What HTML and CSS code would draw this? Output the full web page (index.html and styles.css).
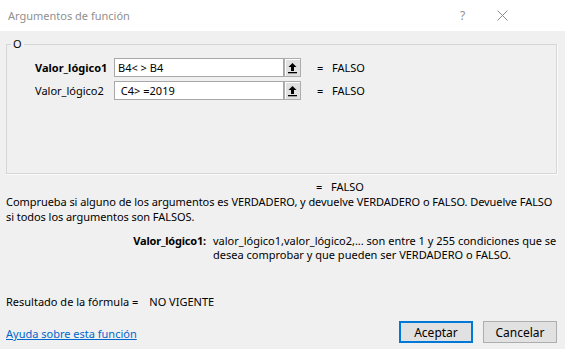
FILE: index.html
```html
<!DOCTYPE html>
<html lang="es">
<head>
<meta charset="utf-8">
<title>Argumentos de función</title>
<link rel="stylesheet" href="styles.css">
</head>
<body>
<div class="dialog">
  <div class="titlebar">
    <span class="title">Argumentos de función</span>
    <span class="help">?</span>
    <span class="close">
      <svg width="11" height="11" viewBox="0 0 11 11"><path d="M0.5 0.5 L10.5 10.5 M10.5 0.5 L0.5 10.5" stroke="#8a8a8a" stroke-width="1" fill="none"/></svg>
    </span>
  </div>
  <div class="body">
    <div class="group">
      <span class="legend">O</span>
      <div class="arg-row">
        <span class="arg-label bold">Valor_lógico1</span>
        <span class="arg-input">B4&lt; &gt; B4</span>
        <span class="ref-btn"><svg width="11" height="12" viewBox="0 0 11 12"><path d="M5.5 1 L1.5 5 H4 V9 H7 V5 H9.5 Z" fill="#000"/><rect x="1" y="10" width="9" height="1.3" fill="#000"/></svg></span>
        <span class="eq">=</span>
        <span class="val">FALSO</span>
      </div>
      <div class="arg-row">
        <span class="arg-label">Valor_lógico2</span>
        <span class="arg-input">&nbsp;C4&gt; =2019</span>
        <span class="ref-btn"><svg width="11" height="12" viewBox="0 0 11 12"><path d="M5.5 1 L1.5 5 H4 V9 H7 V5 H9.5 Z" fill="#000"/><rect x="1" y="10" width="9" height="1.3" fill="#000"/></svg></span>
        <span class="eq">=</span>
        <span class="val">FALSO</span>
      </div>
    </div>
    <div class="total"><span class="eq">=</span><span class="val">FALSO</span></div>
    <p class="desc">Comprueba si alguno de los argumentos es VERDADERO, y devuelve VERDADERO o FALSO. Devuelve FALSO<br>si todos los argumentos son FALSOS.</p>
    <div class="argdesc">
      <span class="argname">Valor_lógico1:</span>
      <span class="argtext">valor_lógico1,valor_lógico2,... son entre 1 y 255 condiciones que se<br>desea comprobar y que pueden ser VERDADERO o FALSO.</span>
    </div>
    <div class="formula"><span>Resultado de la fórmula =</span><span class="formula-val">NO VIGENTE</span></div>
    <div class="footer">
      <a class="help-link" href="#">Ayuda sobre esta función</a>
      <button class="btn primary">Aceptar</button>
      <button class="btn">Cancelar</button>
    </div>
  </div>
</div>
</body>
</html>
```

FILE: styles.css
```css
* { box-sizing: border-box; }
html, body { margin: 0; padding: 0; }
body {
  width: 565px;
  height: 349px;
  background: #f0f0f0;
  font-family: "Noto Sans", "Open Sans", sans-serif;
  font-size: 11px;
  color: #000;
  overflow: hidden;
}
.dialog { width: 565px; height: 349px; display: flex; flex-direction: column; }
.titlebar {
  flex: 0 0 31px;
  height: 31px;
  background: #fff;
  display: flex;
  align-items: center;
  padding-left: 8px;
}
.title { flex: 1; font-size: 11px; color: #8f8f8f; }
.help { width: 37px; font-size: 12px; color: #8f8f8f; }
.close { width: 68px; display: flex; }
.body { flex: 1 1 auto; min-height: 0; padding: 13px 8px 0 6px; display: flex; flex-direction: column; }
.body > * { flex-shrink: 0; }
.group {
  position: relative;
  height: 130px;
  border: 1px solid #d6d6d6;
  box-shadow: 1px 1px 0 #fbfbfb;
  padding: 13px 0 0 28px;
  display: flex;
  flex-direction: column;
  gap: 4px;
}
.legend {
  position: absolute;
  left: 4px;
  top: -9px;
  padding: 0 2px;
  background: #f0f0f0;
  font-size: 11px;
  line-height: 16px;
}
.arg-row { display: flex; align-items: center; height: 19px; }
.arg-label { width: 79px; }
.bold { font-weight: bold; }
.arg-input {
  width: 170px;
  height: 19px;
  background: #fff;
  border: 1px solid #a8a8a8;
  padding-left: 3px;
  line-height: 17px;
}
.ref-btn {
  width: 17px;
  height: 19px;
  background: #e1e1e1;
  border: 1px solid #adadad;
  box-shadow: inset 1px 1px 0 #fff;
  display: flex;
  align-items: center;
  justify-content: center;
}
.eq { margin-left: 16px; width: 15px; }
.total { display: flex; margin-top: 5px; padding-left: 294px; line-height: 15px; }
.desc { margin: 0; line-height: 15px; white-space: nowrap; letter-spacing: -0.06px; }
.argdesc { display: flex; margin-top: 10px; line-height: 14px; white-space: nowrap; }
.argname { width: 207px; text-align: right; font-weight: bold; padding-right: 7px; letter-spacing: -0.2px; }
.argtext { flex: 1; }
.formula { margin-top: 32px; display: flex; line-height: 15px; }
.formula-val { margin-left: 11px; }
.footer { display: flex; align-items: flex-end; margin-top: 12px; }
.help-link { flex: 1; color: #0066cc; text-decoration: underline; line-height: 15px; margin-bottom: 2px; }
.btn {
  font-family: inherit;
  font-size: 12px;
  width: 74px;
  height: 22px;
  background: #e1e1e1;
  border: 1px solid #adadad;
  margin-left: 10px;
  padding: 0;
  color: #000;
}
.btn.primary { border: 2px solid #0078d7; margin-left: 0; }
```
